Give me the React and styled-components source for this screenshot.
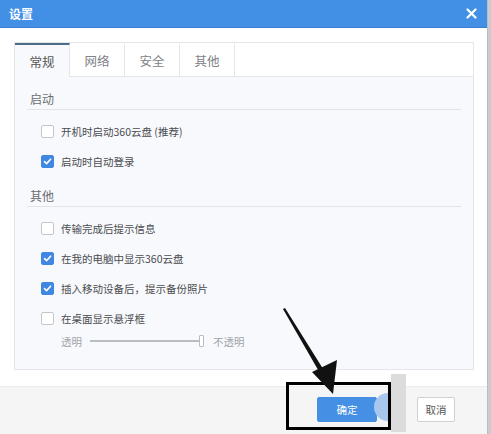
import React from 'react';
import styled, { createGlobalStyle } from 'styled-components';

const GlobalStyle = createGlobalStyle`
  html, body {
    margin: 0;
    padding: 0;
    overflow: hidden;
    background: #c9cbcf;
  }
  * {
    box-sizing: border-box;
  }
`;

const Screen = styled.div`
  position: relative;
  width: 491px;
  height: 434px;
  font-family: "Noto Sans CJK SC", "Noto Sans", sans-serif;
`;

const Dialog = styled.div`
  width: 488px;
  height: 434px;
  display: flex;
  flex-direction: column;
  background: #fff;
  border-right: 1px solid #b9bcc2;
`;

const TitleBar = styled.div`
  height: 28px;
  flex-shrink: 0;
  display: flex;
  align-items: center;
  justify-content: space-between;
  padding: 0 8px 0 9px;
  background: #4290e6;
  border-bottom: 1px solid #3a7fd0;
  color: #fff;
  font-size: 12px;
  font-weight: 700;
`;

const CloseButton = styled.span`
  display: flex;
  align-items: center;
  justify-content: center;
  width: 16px;
  height: 16px;
`;

const Body = styled.div`
  padding: 14px 14px 0 14px;
`;

const Panel = styled.div`
  width: 460px;
  height: 328px;
  display: flex;
  flex-direction: column;
  border: 1px solid #e4e6ea;
`;

const TabBar = styled.div`
  height: 34px;
  flex-shrink: 0;
  display: flex;
  background: #fff;
  border-bottom: 1px solid #e4e6ea;
`;

const Tab = styled.div`
  width: 55px;
  display: flex;
  align-items: center;
  justify-content: center;
  font-size: 12.5px;
  color: ${p => (p.$active ? '#555' : '#808287')};
  background: ${p => (p.$active ? '#f8f9fc' : '#fff')};
  border-right: 1px solid #e4e6ea;
  border-top: 2px solid ${p => (p.$active ? '#4d6b8a' : 'transparent')};
  margin-bottom: ${p => (p.$active ? '-1px' : '0')};
`;

const Content = styled.div`
  flex: 1;
  background: #f8f9fc;
  padding: 12px 12px 0 12px;
`;

const Section = styled.div`
  margin-top: ${p => p.$gap || 0}px;
`;

const SectionTitle = styled.div`
  height: 21px;
  line-height: 20px;
  padding-left: 3px;
  font-size: 12px;
  color: #6a6d72;
  border-bottom: 1px solid #e2e4e8;
`;

const OptionList = styled.div`
  padding: 6px 0 0 14px;
`;

const Option = styled.label`
  height: 30px;
  display: flex;
  align-items: center;
  gap: 7px;
  font-size: 10.5px;
  color: #4a4c50;
`;

const Box = styled.span`
  width: 13px;
  height: 13px;
  border-radius: 2px;
  display: flex;
  align-items: center;
  justify-content: center;
  background: ${p => (p.$checked ? '#3f87e0' : '#fff')};
  border: 1px solid ${p => (p.$checked ? '#3f87e0' : '#c4c6ca')};
`;

const SliderRow = styled.div`
  height: 16px;
  display: flex;
  align-items: center;
  padding-left: 20px;
  font-size: 10.5px;
  color: #a0a3a8;
`;

const Track = styled.div`
  position: relative;
  width: 114px;
  height: 2px;
  margin: 0 9px 0 8px;
  background: #b9bcc1;
`;

const Thumb = styled.span`
  position: absolute;
  right: 0;
  top: -5px;
  width: 5px;
  height: 12px;
  background: #fff;
  border: 1px solid #b9bcc1;
  border-radius: 1px;
`;

const Footer = styled.div`
  margin-top: auto;
  height: 48px;
  display: flex;
  align-items: center;
  justify-content: flex-end;
  gap: 40px;
  padding: 0 32px 2px 0;
  background: #f5f5f6;
  border-top: 1px solid #ececee;
`;

const Button = styled.button`
  height: 25px;
  width: ${p => p.$width}px;
  border-radius: 2px;
  font-family: inherit;
  font-size: 10.5px;
  border: 1px solid ${p => (p.$primary ? '#4590e4' : '#cfd1d4')};
  background: ${p => (p.$primary ? '#4590e4' : '#fff')};
  color: ${p => (p.$primary ? '#fff' : '#555')};
  padding: 0;
`;

const Marks = styled.svg`
  position: absolute;
  left: 0;
  top: 0;
  pointer-events: none;
`;

const Check = () => (
  <svg width="9" height="9" viewBox="0 0 9 9">
    <path d="M1.5 4.6 L3.6 6.6 L7.6 2.2" fill="none" stroke="#fff" strokeWidth="1.6" strokeLinecap="round" strokeLinejoin="round" />
  </svg>
);

const CheckOption = ({ checked, children }) => (
  <Option>
    <Box $checked={checked}>{checked && <Check />}</Box>
    {children}
  </Option>
);

const App = () => {
  return (
    <Screen>
      <GlobalStyle />
      <Dialog>
        <TitleBar>
          设置
          <CloseButton>
            <svg width="11" height="11" viewBox="0 0 11 11">
              <path d="M1.5 1.5 L9.5 9.5 M9.5 1.5 L1.5 9.5" stroke="#fff" strokeWidth="2.2" strokeLinecap="round" />
            </svg>
          </CloseButton>
        </TitleBar>

        <Body>
          <Panel>
            <TabBar>
              <Tab $active>常规</Tab>
              <Tab>网络</Tab>
              <Tab>安全</Tab>
              <Tab>其他</Tab>
            </TabBar>
            <Content>
              <Section>
                <SectionTitle>启动</SectionTitle>
                <OptionList>
                  <CheckOption>开机时启动360云盘 (推荐)</CheckOption>
                  <CheckOption checked>启动时自动登录</CheckOption>
                </OptionList>
              </Section>
              <Section $gap={10}>
                <SectionTitle>其他</SectionTitle>
                <OptionList>
                  <CheckOption>传输完成后提示信息</CheckOption>
                  <CheckOption checked>在我的电脑中显示360云盘</CheckOption>
                  <CheckOption checked>插入移动设备后，提示备份照片</CheckOption>
                  <CheckOption>在桌面显示悬浮框</CheckOption>
                  <SliderRow>
                    透明
                    <Track>
                      <Thumb />
                    </Track>
                    不透明
                  </SliderRow>
                </OptionList>
              </Section>
            </Content>
          </Panel>
        </Body>

        <Footer>
          <Button $primary $width={60}>确定</Button>
          <Button $width={38}>取消</Button>
        </Footer>
      </Dialog>

      {/* annotation drawn over the footer */}
      <Marks width="491" height="434" viewBox="0 0 491 434">
        <circle cx="388" cy="407" r="14" fill="#a9c7ee" />
        <rect x="391" y="374" width="15" height="58" fill="#dcdcdd" />
        <rect x="287.5" y="383.5" width="102" height="45" fill="none" stroke="#000" strokeWidth="3" />
        <polygon points="283,309 285,308 325,372 321,375" fill="#111" />
        <polygon points="312,372 337,360 333,394" fill="#111" />
      </Marks>
    </Screen>
  );
};

export default App;
